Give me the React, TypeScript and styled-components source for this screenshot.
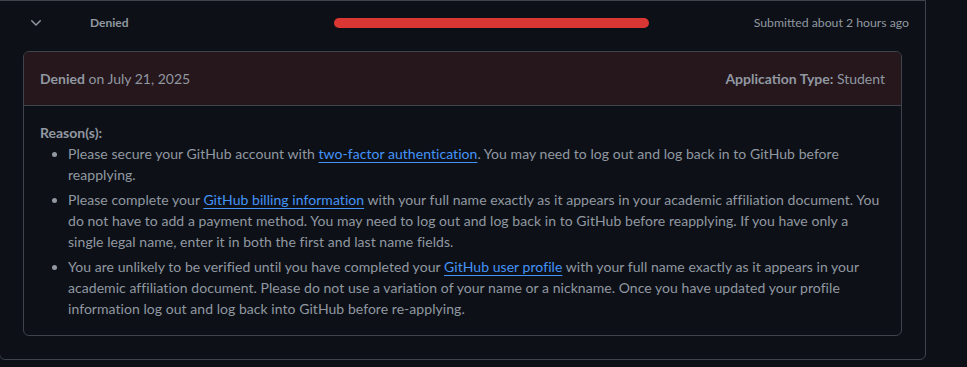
import React from "react";
import styled, { createGlobalStyle } from "styled-components";

const Global = createGlobalStyle`
  html, body { margin: 0; padding: 0; background: #0d1117; }
  body { font-family: Lato, "Noto Sans", sans-serif; color: #9198a1; }
`;

const Outer = styled.section`
  box-sizing: border-box;
  margin-left: -1px;
  width: 927px;
  border: 1px solid #3d444d;
  border-radius: 0 0 6px 6px;
  background: #0d1117;
  padding-bottom: 23px;
`;

const Row = styled.div`
  display: flex;
  align-items: center;
  height: 43px;
  padding: 0 16px 0 28px;
  font-size: 12px;
`;

const ChevronCell = styled.div`
  width: 16px;
  height: 16px;
  display: flex;
  color: #9198a1;
`;

const Status = styled.div`
  margin-left: 46px;
  width: 244px;
  font-weight: 700;
  color: #9198a1;
`;

const Bar = styled.div`
  width: 315px;
  height: 10px;
  border-radius: 5px;
  background: #da3633;
`;

const Submitted = styled.div`
  margin-left: auto;
  color: #9198a1;
  font-size: 12.25px;
`;

const Card = styled.div`
  margin: 7px 23px 0 23px;
  border: 1px solid #3d444d;
  border-radius: 6px;
  overflow: hidden;
  font-size: 14px;
  line-height: 21px;
`;

const CardHeader = styled.div`
  display: flex;
  justify-content: space-between;
  padding: 16px;
  background: #25171c;
  border-bottom: 1px solid #3d444d;
`;

const Strong = styled.strong`
  font-weight: 700;
`;

const CardBody = styled.div`
  padding: 16px;
`;

const List = styled.ul`
  margin: 0;
  padding-left: 28px;
  letter-spacing: 0.05px;
`;

const Item = styled.li`
  margin-top: 4px;
  &:first-child { margin-top: 0; }
  &::marker { color: #9198a1; }
`;

const Link = styled.a`
  color: #4493f8;
  text-decoration: underline;
  text-underline-offset: 3px;
`;

const Chevron = () => (
  <svg width="16" height="16" viewBox="0 0 16 16" fill="currentColor">
    <path d="M12.78 5.22a.749.749 0 0 1 0 1.06l-4.25 4.25a.749.749 0 0 1-1.06 0L3.22 6.28a.749.749 0 1 1 1.060-1.06L8 8.94l3.72-3.72a.749.749 0 0 1 1.06 0Z" />
  </svg>
);

export default function App() {
  return (
    <>
      <Global />
      <Outer>
        <Row>
          <ChevronCell>
            <Chevron />
          </ChevronCell>
          <Status>Denied</Status>
          <Bar />
          <Submitted>Submitted about 2 hours ago</Submitted>
        </Row>
        <Card>
          <CardHeader>
            <div>
              <Strong>Denied</Strong> on July 21, 2025
            </div>
            <div>
              <Strong>Application Type:</Strong> Student
            </div>
          </CardHeader>
          <CardBody>
            <Strong>Reason(s):</Strong>
            <List>
              <Item>
                Please secure your GitHub account with{" "}
                <Link href="#">two-factor authentication</Link>. You may need to log out and log back in to
                GitHub before reapplying.
              </Item>
              <Item>
                Please complete your <Link href="#">GitHub billing information</Link> with your full name
                exactly as it appears in your academic affiliation document. You do not have to add a payment
                method. You may need to log out and log back in to GitHub before reapplying. If you have only a
                single legal name, enter it in both the first and last name fields.
              </Item>
              <Item>
                You are unlikely to be verified until you have completed your{" "}
                <Link href="#">GitHub user profile</Link> with your full name exactly as it appears in your
                academic affiliation document. Please do not use a variation of your name or a nickname. Once
                you have updated your profile information log out and log back into GitHub before re-applying.
              </Item>
            </List>
          </CardBody>
        </Card>
      </Outer>
    </>
  );
}
